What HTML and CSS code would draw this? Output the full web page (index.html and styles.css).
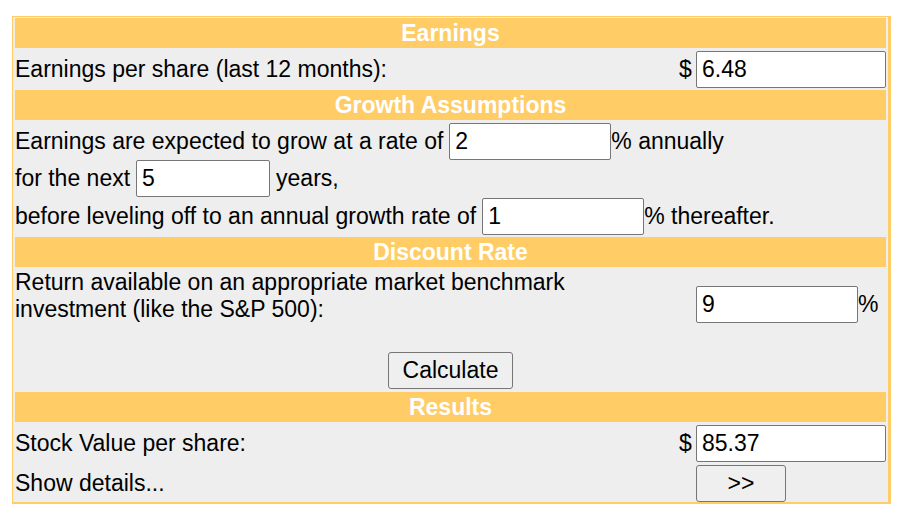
FILE: index.html
```html
<!DOCTYPE html>
<html lang="en">
<head>
<meta charset="utf-8"/>
<title>Stock Value Calculator</title>
<link rel="stylesheet" href="styles.css">
</head>
<body>
<form class="calc">
  <div class="head">Earnings</div>
  <div class="row">
    <span class="label">Earnings per share (last 12 months):</span>
    <span class="unit">$</span>
    <span class="cell"><input class="field wide" type="text" value="6.48"/></span>
  </div>

  <div class="head">Growth Assumptions</div>
  <div class="growth">
    <div class="line tall">
      <span class="pre">Earnings are expected to grow at a rate of</span>
      <input class="field" type="text" value="2"/>
      <span>% annually</span>
    </div>
    <div class="line">
      <span class="pre">for the next</span>
      <input class="field short" type="text" value="5"/>
      <span class="post">years,</span>
    </div>
    <div class="line tall">
      <span class="pre">before leveling off to an annual growth rate of</span>
      <input class="field" type="text" value="1"/>
      <span>% thereafter.</span>
    </div>
  </div>

  <div class="head">Discount Rate</div>
  <div class="row discount">
    <span class="label">Return available on an appropriate market benchmark investment (like the S&amp;P 500):</span>
    <span class="unit"></span>
    <span class="cell"><input class="field" type="text" value="9"/>%</span>
  </div>
  <div class="submit">
    <button class="btn calc-btn" type="button">Calculate</button>
  </div>

  <div class="head">Results</div>
  <div class="row">
    <span class="label">Stock Value per share:</span>
    <span class="unit">$</span>
    <span class="cell"><input class="field wide" type="text" value="85.37"/></span>
  </div>
  <div class="row">
    <span class="label">Show details...</span>
    <span class="unit"></span>
    <span class="cell"><button class="btn more-btn" type="button">&gt;&gt;</button></span>
  </div>
</form>
</body>
</html>
```

FILE: styles.css
```css
body {
  margin: 0;
  background: #ffffff;
  font-family: "Liberation Sans", Arial, sans-serif;
  font-size: 23px;
  color: #000000;
}
.calc {
  display: flex;
  flex-direction: column;
  gap: 2px;
  width: 871px;
  margin: 16px 0 0 12px;
  padding: 1px 2px 0 2px;
  background: #eeeeee;
  border: 1px solid #ffcc66;
  border-right-width: 3px;
  border-bottom-width: 2px;
}
.head {
  height: 30px;
  line-height: 30px;
  background: #ffcc66;
  color: #ffffff;
  font-weight: bold;
  text-align: center;
}
.row {
  display: flex;
  align-items: center;
  height: 38px;
}
.label {
  flex: 1;
}
.unit {
  flex: none;
  width: 14px;
  margin-right: 3px;
  text-align: left;
}
.cell {
  flex: none;
  display: flex;
  align-items: center;
  width: 190px;
}
.field {
  box-sizing: border-box;
  width: 162px;
  height: 37px;
  padding: 0 5px;
  border: 1px solid #767676;
  border-radius: 2px;
  background: #ffffff;
  font-family: inherit;
  font-size: 23px;
  color: #000000;
}
.field.wide {
  width: 190px;
}
.field.short {
  width: 134px;
}
.line {
  display: flex;
  align-items: center;
  height: 37px;
}
.line.tall {
  height: 38px;
}
.pre {
  margin-right: 6px;
}
.post {
  margin-left: 6px;
}
.discount {
  align-items: flex-start;
  height: 54px;
}
.discount .cell {
  margin-top: 17px;
}
.submit {
  padding: 27px 0 1px;
  text-align: center;
}
.btn {
  box-sizing: border-box;
  height: 37px;
  padding: 0;
  border: 1px solid #767676;
  border-radius: 3px;
  background: #efefef;
  font-family: inherit;
  font-size: 23px;
  color: #000000;
  cursor: pointer;
}
.calc-btn {
  width: 125px;
}
.more-btn {
  width: 90px;
}
```
